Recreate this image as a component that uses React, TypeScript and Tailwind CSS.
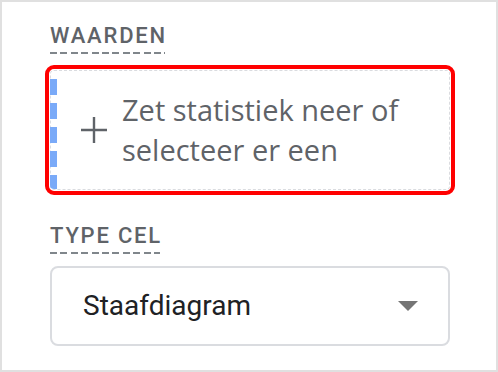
import React from 'react';

const Label: React.FC<{ text: string }> = ({ text }) => (
    <div className="flex">
        <span className="relative pb-[6px] text-[22px] leading-[24px] font-medium tracking-[1.8px] text-[#5f6368] uppercase">
            {text}
            <span className="absolute left-0 right-[2px] bottom-0 h-[2px] bg-[repeating-linear-gradient(90deg,#80868b_0_7px,transparent_7px_10.4px)]" />
        </span>
    </div>
);

export default function App() {
    return (
        <div
            className="w-[498px] h-[372px] bg-white border-2 border-[#e0e0e0] pl-[48px] pt-[22px]"
            style={{ fontFamily: 'Roboto, "Liberation Sans", sans-serif' }}
        >
            <Label text="Waarden" />

            {/* Drop zone */}
            <div className="relative mt-[16px] w-[400px] h-[120px] flex items-center rounded-[4px] border border-dashed border-[#dadce0] outline-4 outline-offset-[1px] outline-[#ff0000]">
                <div className="absolute left-[-1px] top-[8px] bottom-0 w-[7px] rounded-bl-[4px] bg-[repeating-linear-gradient(180deg,#7aaaf8_0_16px,transparent_16px_24px)]" />
                <svg width="28" height="28" viewBox="0 0 28 28" className="ml-[29px] flex-shrink-0">
                    <path d="M14 1v26M1 14h26" stroke="#5f6368" strokeWidth="2.4" fill="none" />
                </svg>
                <p
                    className="ml-[14px] text-[29px] leading-[40px] font-medium text-[#5f6368]"
                    style={{ fontFamily: '"Open Sans", Roboto, sans-serif' }}
                >
                    Zet statistiek neer of
                    <br />
                    selecteer er een
                </p>
            </div>

            <div className="mt-[34px]">
                <Label text="Type cel" />
            </div>

            {/* Select */}
            <div className="mt-[12px] w-[400px] h-[80px] flex items-center justify-between rounded-[8px] border-2 border-[#dadce0] pl-[31px] pr-[30px]">
                <span className="text-[28px] text-[#202124]">Staafdiagram</span>
                <svg width="20" height="10" viewBox="0 0 20 10">
                    <path d="M0 0h20L10 10z" fill="#757575" />
                </svg>
            </div>
        </div>
    );
}
